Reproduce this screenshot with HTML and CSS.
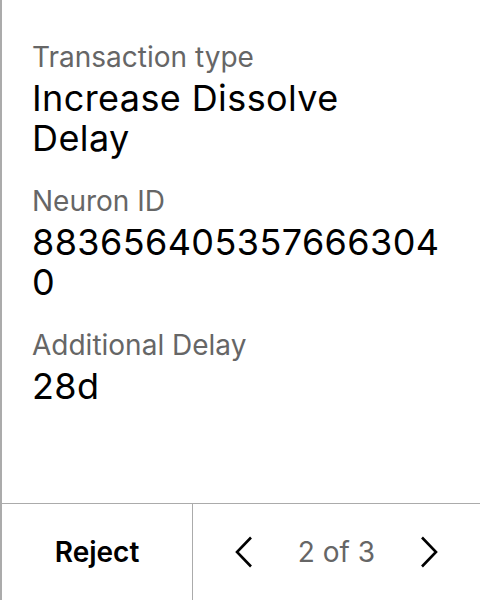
FILE: index.html
```html
<!DOCTYPE html>
<html>
<head>
<meta charset="utf-8">
<link rel="stylesheet" href="styles.css">
</head>
<body>
<div class="screen">
  <div class="content">
    <div class="field">
      <div class="label">Transaction type</div>
      <div class="value">Increase Dissolve Delay</div>
    </div>
    <div class="field">
      <div class="label">Neuron ID</div>
      <div class="value num">8836564053576663040</div>
    </div>
    <div class="field">
      <div class="label">Additional Delay</div>
      <div class="value">28d</div>
    </div>
  </div>
  <div class="footer">
    <div class="reject">Reject</div>
    <div class="nav">
      <svg class="chev" width="19" height="32" viewBox="0 0 19 32"><path d="M17 1.5 L3 16 L17 30.5" fill="none" stroke="#000" stroke-width="2.6"/></svg>
      <span class="page">2 of 3</span>
      <svg class="chev" width="19" height="32" viewBox="0 0 19 32"><path d="M2 1.5 L16 16 L2 30.5" fill="none" stroke="#000" stroke-width="2.6"/></svg>
    </div>
  </div>
</div>
</body>
</html>
```
FILE: styles.css
```css
html, body { margin: 0; padding: 0; background: #fff; }
body { font-family: Inter, "Noto Sans", sans-serif; }
.screen {
  width: 480px; height: 600px; box-sizing: border-box;
  border-left: 2px solid #ababab;
  display: flex; flex-direction: column;
}
.content { flex: 1; padding: 41px 38px 0 30px; }
.field { margin-bottom: 27px; }
.label { font-size: 28px; line-height: 32px; color: #666666; }
.value { font-size: 36px; line-height: 40px; color: #000; margin-top: 5px; letter-spacing: 0.4px; overflow-wrap: anywhere; }
.num { word-break: break-all; }
.footer {
  height: 96px; border-top: 1px solid #ababab;
  display: flex;
}
.reject {
  width: 190px; border-right: 1px solid #ababab;
  display: flex; align-items: center; justify-content: center;
  font-size: 28px; font-weight: 600; color: #000;
}
.nav { flex: 1; display: flex; align-items: center; justify-content: space-between; padding: 0 41px 0 41px; }
.page { font-size: 28px; color: #666666; }
```
